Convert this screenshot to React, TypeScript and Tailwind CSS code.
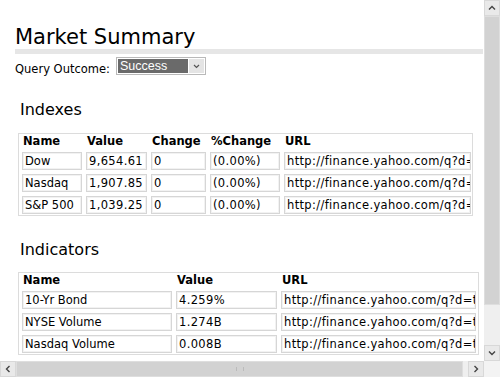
import type { ReactNode } from "react";

const font = { fontFamily: '"DejaVu Sans", Verdana, sans-serif' };

// wide = Verdana punctuation is wider than DejaVu's, so loosen those columns a little
type Col = { label: string; width: number; wide?: boolean };

function Cell({ width, wide, children }: { width: number; wide?: boolean; children: ReactNode }) {
  return (
    <div
      className={
        "h-[18px] shrink-0 overflow-hidden whitespace-nowrap border border-[#d6d6d6] bg-white pl-[2px] text-[11.5px] leading-[16px] text-black shadow-[inset_0_0_0_1px_#f2f2f2]" +
        (wide ? " tracking-[0.35px]" : "")
      }
      style={{ width }}
    >
      {children}
    </div>
  );
}

function DataTable({ cols, rows, width }: { cols: Col[]; rows: string[][]; width: number }) {
  return (
    <div className="ml-[18px] border border-[#dcdcdc] px-[3px] pb-[1px]" style={{ width }}>
      <div className="flex h-[15px] gap-[4px] text-[11.5px] font-bold leading-[15px] text-black">
        {cols.map((c) => (
          <div key={c.label} className="shrink-0 pl-[1px]" style={{ width: c.width }}>
            {c.label}
          </div>
        ))}
      </div>
      <div className="mt-[3px] flex flex-col gap-[4px]">
        {rows.map((r) => (
          <div key={r[0]} className="flex gap-[4px]">
            {r.map((v, i) => (
              <Cell key={i} width={cols[i].width} wide={cols[i].wide}>
                {v}
              </Cell>
            ))}
          </div>
        ))}
      </div>
    </div>
  );
}

function Chevron({ dir }: { dir: "up" | "down" | "left" | "right" }) {
  const rot = { up: 0, right: 90, down: 180, left: 270 }[dir];
  return (
    <svg width="8" height="8" viewBox="0 0 8 8" style={{ transform: `rotate(${rot}deg)` }}>
      <path d="M1 5.5 L4 2.5 L7 5.5" fill="none" stroke="#444" strokeWidth="1.4" />
    </svg>
  );
}

function ScrollButton({ dir }: { dir: "up" | "down" | "left" | "right" }) {
  return (
    <div className="flex h-[16px] w-[16px] shrink-0 items-center justify-center border border-[#d8d8d8] bg-[#e9e9e9]">
      <Chevron dir={dir} />
    </div>
  );
}

const url = "http://finance.yahoo.com/q?d=t";

export default function App() {
  return (
    <div className="flex h-[377px] w-[500px] flex-col overflow-hidden bg-white" style={font}>
      <div className="flex h-[361px]">
        <div className="h-full w-[484px] overflow-hidden">
          <div className="mt-[26px] ml-[15px] text-[21px] leading-[23px] text-black">Market Summary</div>
          <div className="ml-[15px] h-[5px] w-[468px] bg-[#e6e6e6]" />

          <div className="mt-[3px] ml-[15px] flex items-start">
            <div className="mt-[5px] text-[11.5px] leading-[14px] text-black">Query Outcome:</div>
            <div className="ml-[6px] flex h-[18px] w-[90px] items-stretch border border-[#b9b9b9] bg-white p-[1px]">
              <div
                className="flex-1 bg-[#6a6a6a] pl-[2px] text-[12.5px] leading-[14px] text-white"
                style={{ fontFamily: '"Liberation Sans", Arial, sans-serif' }}
              >
                Success
              </div>
              <div className="ml-[1px] flex w-[15px] items-center justify-center bg-[#e4e4e4]">
                <svg width="7" height="5" viewBox="0 0 7 5">
                  <path d="M1 1 L3.5 3.5 L6 1" fill="none" stroke="#555" strokeWidth="1.2" />
                </svg>
              </div>
            </div>
          </div>

          <div className="mt-[24px] ml-[20px] text-[16px] leading-[19px] text-black">Indexes</div>
          <div className="mt-[14px]">
            <DataTable
              width={455}
              cols={[
                { label: "Name", width: 60 },
                { label: "Value", width: 61, wide: true },
                { label: "Change", width: 55 },
                { label: "%Change", width: 70, wide: true },
                { label: "URL", width: 187, wide: true },
              ]}
              rows={[
                ["Dow", "9,654.61", "0", "(0.00%)", url],
                ["Nasdaq", "1,907.85", "0", "(0.00%)", url],
                ["S&P 500", "1,039.25", "0", "(0.00%)", url],
              ]}
            />
          </div>

          <div className="mt-[24px] ml-[20px] text-[16px] leading-[19px] text-black">Indicators</div>
          <div className="mt-[13px]">
            <DataTable
              width={461}
              cols={[
                { label: "Name", width: 150 },
                { label: "Value", width: 101, wide: true },
                { label: "URL", width: 195, wide: true },
              ]}
              rows={[
                ["10-Yr Bond", "4.259%", url],
                ["NYSE Volume", "1.274B", url],
                ["Nasdaq Volume", "0.008B", url],
              ]}
            />
          </div>
        </div>

        {/* vertical scrollbar */}
        <div className="flex h-full w-[16px] flex-col bg-[#efefef]">
          <ScrollButton dir="up" />
          <div className="h-[289px] border border-[#dedede] bg-[#d2d2d2]" />
          <div className="flex-1" />
          <ScrollButton dir="down" />
        </div>
      </div>

      {/* horizontal scrollbar */}
      <div className="flex h-[16px]">
        <div className="flex w-[484px] bg-[#efefef]">
          <ScrollButton dir="left" />
          <div className="flex w-[447px] items-center justify-center border border-[#dedede] bg-[#d2d2d2]">
            <div className="h-[4px] w-[8px] border-x border-[#bbb]" />
          </div>
          <div className="flex-1" />
          <ScrollButton dir="right" />
        </div>
        <div className="w-[16px] bg-[#f3f3f3]" />
      </div>
    </div>
  );
}
